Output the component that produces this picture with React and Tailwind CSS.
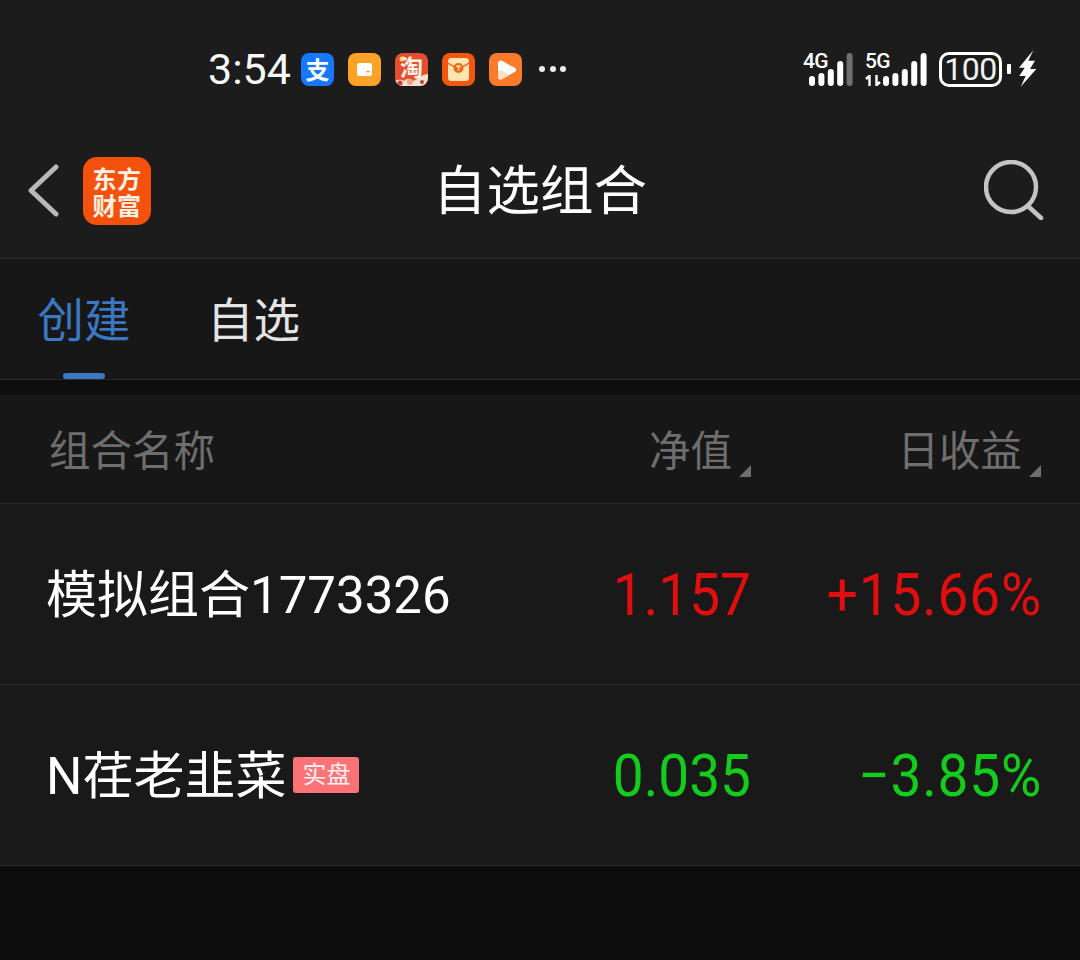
const cjk = "font-['Roboto','Noto_Sans_CJK_SC',sans-serif]";

function Bars({ heights, dim, w = 6, gap = 3.4 }) {
  const maxH = Math.max(...heights);
  let x = 0;
  return (
    <svg width={heights.length * w + (heights.length - 1) * gap} height={maxH} className="block">
      {heights.map((h, i) => {
        const r = (
          <rect key={i} x={x} y={maxH - h} width={w} height={h} rx={w / 2} fill={dim === i ? "#6f6f6f" : "#fff"} />
        );
        x += w + gap;
        return r;
      })}
    </svg>
  );
}

function AppIcon({ className, children }) {
  return (
    <div className={`w-[33px] h-[33px] rounded-[8px] flex items-center justify-center shrink-0 ${className}`}>
      {children}
    </div>
  );
}

function StatusBar() {
  return (
    <div className="h-[130px] pt-[46px] pl-[208px] pr-[43px] flex items-start justify-between">
      <div className="flex items-center h-[46px]">
        <span className="text-[43px] leading-[46px] text-[#f8f8f8] font-['Roboto',sans-serif] w-[93px]">3:54</span>
        <div className="flex items-center gap-[14px]">
          <AppIcon className="bg-[#1677ff]">
            <span className="text-white text-[24px] leading-none font-bold font-['Noto_Sans_CJK_SC',sans-serif]">支</span>
          </AppIcon>
          <AppIcon className="bg-[#fba227]">
            <svg width="33" height="33" viewBox="0 0 33 33">
              <rect x="9" y="10" width="15" height="13" rx="2.5" fill="#fff" />
              <rect x="18" y="18" width="4" height="1.4" fill="#fba227" />
            </svg>
          </AppIcon>
          <AppIcon className="bg-[#e4502f] relative">
            <svg className="absolute left-0 bottom-0 rounded-b-[8px]" width="33" height="12" viewBox="0 0 33 12">
              <path d="M0 12V7c4-2 7-1 9 0 3-3 7-3 9 0 4-1 6-6 15-7v12z" fill="#f3e0d0" />
              <circle cx="5" cy="9" r="2.500" fill="#d9363e" />
              <circle cx="15" cy="8" r="3" fill="#e9a27c" />
              <circle cx="27" cy="8" r="2" fill="#c9402c" />
            </svg>
            <svg className="absolute left-[4px] top-[3px]" width="6" height="6" viewBox="0 0 6 6">
              <circle cx="3" cy="3" r="2.500" fill="#ffd36b" />
            </svg>
            <span className="relative text-[#fff3e6] text-[23px] leading-none font-bold font-['Noto_Sans_CJK_SC',sans-serif] -mt-[5px]">淘</span>
          </AppIcon>
          <AppIcon className="bg-[#f2570f]">
            <svg width="33" height="33" viewBox="0 0 33 33">
              <rect x="6" y="5" width="21" height="23" rx="3.500" fill="#ffe6b0" />
              <path d="M6 10c6 5 15 5 21 0" stroke="#f0641c" strokeWidth="1.500" fill="none" />
              <circle cx="16.500" cy="15" r="5" fill="#ee6a1a" />
              <path d="M14.200 13.200h4.600M16.500 13.200v4.200" stroke="#ffe6b0" strokeWidth="1.400" />
            </svg>
          </AppIcon>
          <AppIcon className="bg-[#fb7a2b]">
            <svg width="33" height="33" viewBox="0 0 33 33">
              <path d="M9 10c0-2 2-3 3.800-2.200l13 7c1.700 1 1.700 3.400 0 4.300l-13 7C11 27 9 26 9 24z" fill="#fff" />
              <path d="M9 17c4 0 8 2 11 5.600l-7.200 3.900C11 27 9 26 9 24z" fill="#fde0c8" />
            </svg>
          </AppIcon>
          <div className="flex gap-[4.500px] ml-[3px]">
            <span className="w-[6px] h-[6px] rounded-full bg-[#eeeeee]" />
            <span className="w-[6px] h-[6px] rounded-full bg-[#eeeeee]" />
            <span className="w-[6px] h-[6px] rounded-full bg-[#eeeeee]" />
          </div>
        </div>
      </div>
      <div className="flex items-center h-[46px]">
        <div className="relative w-[50px] h-[33px] mr-[12px]">
          <span className="absolute left-0 -top-[1px] text-[21px] leading-[18px] font-medium tracking-[-0.800px] text-white font-['Roboto',sans-serif]">4G</span>
          <div className="absolute left-[6px] bottom-0">
            <Bars heights={[10, 13, 17, 25, 33]} dim={4} />
          </div>
        </div>
        <div className="relative w-[62px] h-[33px] mr-[12px]">
          <span className="absolute left-0 -top-[1px] text-[21px] leading-[18px] font-medium tracking-[-0.800px] text-white font-['Roboto',sans-serif]">5G</span>
          <svg className="absolute left-0 bottom-0" width="16" height="11" viewBox="0 0 16 11">
            <path d="M1 4 4.500 .8V11M15 7l-3.500 3.200V0" stroke="#fff" strokeWidth="2.400" fill="none" />
          </svg>
          <div className="absolute left-[18px] bottom-0">
            <Bars heights={[10, 13, 17, 25, 33]} />
          </div>
        </div>
        <div className="w-[63px] h-[35px] rounded-[10px] border-[3px] border-white flex items-center justify-center shrink-0">
          <span className="text-[32px] leading-none text-[#f2f2f2] font-['Roboto',sans-serif] tracking-[-0.500px]">100</span>
        </div>
        <span className="w-[4px] h-[10px] bg-white rounded-[1px] ml-[5px]" />
        <svg className="ml-[7px]" width="19" height="38" viewBox="0 0 19 38">
          <path d="M15.300.3 1 17.700h5.700L1.300 26h6.400L2.700 36.700 18.300 19H12l5-8.300h-6.700z" fill="#fff" />
        </svg>
      </div>
    </div>
  );
}

function NavBar() {
  return (
    <div className="relative h-[129px] border-b border-[#2a2a2a] flex items-center justify-center pb-[4px]">
      <div className="absolute left-[28px] top-[27px] flex items-center">
        <svg width="32" height="54" viewBox="0 0 32 54">
          <path d="M28 3 3 26.500 28 50" stroke="#b9b9b9" strokeWidth="5" fill="none" strokeLinecap="round" strokeLinejoin="round" />
        </svg>
        <div className="ml-[23px] w-[68px] h-[68px] rounded-[14px] bg-[#f4510c] flex flex-col items-center justify-center font-['Noto_Sans_CJK_SC',sans-serif] font-bold text-[#fff1e6] text-[24px] leading-[27px] tracking-[0.500px]">
          <span>东方</span>
          <span>财富</span>
        </div>
      </div>
      <span className={`text-[53.500px] leading-none text-white ${cjk}`}>自选组合</span>
      <svg className="absolute right-[36px] top-[30px]" width="60" height="60" viewBox="0 0 60 60">
        <circle cx="27" cy="27" r="25" stroke="#c4c4c4" strokeWidth="4.500" fill="none" />
        <path d="M45 47 57 58" stroke="#c4c4c4" strokeWidth="4.500" strokeLinecap="round" />
      </svg>
    </div>
  );
}

function Tabs() {
  return (
    <div className="bg-[#171717] h-[121px] border-b border-[#2a2a2a] flex pl-[38px]">
      <div className="relative w-[92px] flex justify-center pt-[34px]">
        <span className={`text-[46.500px] leading-[56px] whitespace-nowrap text-[#3a78c4] ${cjk}`}>创建</span>
        <span className="absolute bottom-0 left-[25px] w-[42px] h-[6px] rounded-full bg-[#3a78c4]" />
      </div>
      <div className="ml-[77px] pt-[34px]">
        <span className={`text-[46.500px] leading-[56px] whitespace-nowrap text-[#e4e4e4] ${cjk}`}>自选</span>
      </div>
    </div>
  );
}

function HeadCell({ children, className }) {
  return (
    <div className={`flex justify-end items-end ${className}`}>
      <span className={`text-[41.500px] leading-[50px] text-[#6e6e6e] ${cjk}`}>{children}</span>
      <svg width="12" height="12" viewBox="0 0 12 12" className="ml-[7px]">
        <path d="M12 0V12H0z" fill="#6e6e6e" />
      </svg>
    </div>
  );
}

function Row({ name, badge, value, pct, color }) {
  return (
    <div className="h-[181px] border-b border-[#2a2a2a] flex items-center pl-[46px] pr-[38px]">
      <div className="flex-1 flex items-center">
        <span className={`text-[51px] leading-none text-white mt-[3px] ${cjk}`}>{name}</span>
        {badge && (
          <span className={`ml-[7px] w-[66px] h-[36px] rounded-[3px] bg-[#fb7377] text-[#fff0f0] text-[24px] leading-[36px] text-center ${cjk}`}>
            {badge}
          </span>
        )}
      </div>
      <span className={`w-[220px] text-right text-[55px] leading-none scale-y-[1.08] mt-[3px] font-['Roboto',sans-serif] ${color}`}>{value}</span>
      <span className={`w-[291px] text-right text-[55px] leading-none tracking-[0.800px] scale-y-[1.08] mt-[3px] font-['Roboto',sans-serif] ${color}`}>{pct}</span>
    </div>
  );
}

export default function App() {
  return (
    <div className={`w-[1080px] h-[960px] bg-[#0c0c0c] overflow-hidden ${cjk}`}>
      <div className="bg-[#1c1c1c]">
        <StatusBar />
        <NavBar />
      </div>
      <Tabs />
      <div className="h-[15px] bg-[#0e0e0e]" />
      <div className="bg-[#191919]">
        <div className="bg-[#171717] h-[109px] border-b border-[#2a2a2a] flex items-start pl-[49px] pr-[39px] pt-[32px]">
          <span className={`flex-1 text-[41.500px] leading-[50px] text-[#6e6e6e] ${cjk}`}>组合名称</span>
          <HeadCell className="w-[220px]">净值</HeadCell>
          <HeadCell className="w-[290px]">日收益</HeadCell>
        </div>
        <Row name="模拟组合1773326" value="1.157" pct="+15.66%" color="text-[#e00e0e]" />
        <Row name="N荏老韭菜" badge="实盘" value="0.035" pct="−3.85%" color="text-[#14cc1c]" />
      </div>
    </div>
  );
}
